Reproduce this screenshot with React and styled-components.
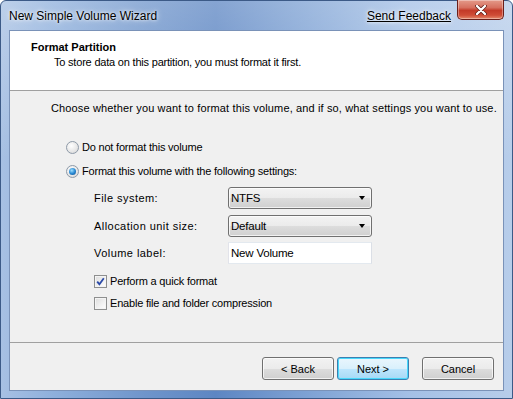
import React from "react";
import styled, { createGlobalStyle, css } from "styled-components";

const Global = createGlobalStyle`
  html, body { margin: 0; padding: 0; background: #fff; }
  body { font-family: "Liberation Sans", Arial, sans-serif; font-size: 11px; letter-spacing: -0.2px; color: #000; }
  * { box-sizing: border-box; }
`;

const Window = styled.div`
  width: 513px;
  height: 399px;
  display: flex;
  flex-direction: column;
  padding: 0 8px 7px 8px;
  border: 1px solid #3c5a87;
  border-radius: 6px 6px 0 0;
  background:
    linear-gradient(180deg, rgba(255,255,255,0.25) 0%, rgba(255,255,255,0) 40%),
    linear-gradient(90deg, #a7c0e3 0%, #8fb0dc 10%, #6f95cb 28%, #5d86c3 42%, #7ea2d4 60%, #a4c0e6 80%, #b7cdea 100%);
`;

const TitleBar = styled.div`
  height: 29px;
  flex: none;
  display: flex;
  align-items: flex-start;
  font-size: 12px;
  letter-spacing: 0;
`;

const Title = styled.div`
  flex: 1;
  padding-top: 8px;
  color: #000;
  text-shadow: 0 0 6px rgba(255,255,255,0.9), 0 0 3px rgba(255,255,255,0.9);
`;

const Link = styled.a`
  margin-top: 8px;
  margin-right: 6px;
  color: #000;
  text-decoration: underline;
  text-shadow: 0 0 6px rgba(255,255,255,0.9), 0 0 3px rgba(255,255,255,0.9);
  cursor: pointer;
`;

const CloseButton = styled.div`
  width: 47px;
  height: 20px;
  margin-top: -1px;
  border: 1px solid #6b1f1a;
  border-top: none;
  border-radius: 0 0 5px 5px;
  background: linear-gradient(180deg, #e49a8a 0%, #d6705f 40%, #c33a28 55%, #cf4c36 80%, #e58a6c 100%);
  box-shadow: inset 0 0 0 1px rgba(255,255,255,0.35);
  display: flex;
  align-items: center;
  justify-content: center;
`;

const Content = styled.div`
  flex: 1;
  display: flex;
  flex-direction: column;
  background: #f0f0f0;
  border: 1px solid #7a92b8;
`;

const Header = styled.div`
  height: 60px;
  flex: none;
  background: #fff;
  border-bottom: 1px solid #a0a0a0;
  padding: 9px 0 0 21px;
`;

const HeaderTitle = styled.div`
  font-weight: bold;
  letter-spacing: 0;
  line-height: 15px;
`;

const HeaderSub = styled.div`
  padding-left: 23px;
  line-height: 15px;
`;

const Body = styled.div`
  flex: 1;
  padding: 10px 0 0 41px;
  border-bottom: 1px solid #a0a0a0;
`;

const Intro = styled.div`
  line-height: 15px;
  white-space: nowrap;
  letter-spacing: 0.14px;
  margin-bottom: 19px;
`;

const OptionRow = styled.label`
  display: flex;
  align-items: center;
  gap: 2px;
  height: 24px;
  margin-left: 15px;
`;

const Radio = styled.span`
  width: 13px;
  height: 13px;
  margin-right: 1px;
  border-radius: 50%;
  border: 1px solid #8e9aa8;
  background: radial-gradient(circle at 40% 35%, #ffffff 0%, #e6e6e6 60%, #d0d0d0 100%);
  display: flex;
  align-items: center;
  justify-content: center;
  ${(p) =>
    p.$checked &&
    css`
      &::after {
        content: "";
        width: 7px;
        height: 7px;
        border-radius: 50%;
        background: radial-gradient(circle at 40% 35%, #9fe0ff 0%, #2a8ad4 50%, #0e4a8a 100%);
      }
    `}
`;

const Settings = styled.div`
  margin: 4px 0 0 43px;
  display: grid;
  grid-template-columns: 134px 144px;
  row-gap: 6px;
  align-items: center;
`;

const FieldLabel = styled.div`
  line-height: 15px;
  letter-spacing: 0.45px;
`;

const Combo = styled.div`
  height: 22px;
  border: 1px solid #707070;
  border-radius: 3px;
  background: linear-gradient(180deg, #f3f3f3 0%, #ebebeb 50%, #dddddd 51%, #cfcfcf 100%);
  box-shadow: inset 0 0 0 1px rgba(255,255,255,0.7);
  display: flex;
  align-items: center;
  padding: 0 6px 0 2px;
  justify-content: space-between;
  font-size: 11.5px;
`;

const Arrow = styled.span`
  width: 0;
  height: 0;
  border-left: 3.5px solid transparent;
  border-right: 3.5px solid transparent;
  border-top: 4px solid #000;
`;

const TextInput = styled.div`
  height: 22px;
  margin-top: -1px;
  border: 1px solid #abadb3;
  border-top-color: #e3e9ef;
  border-left-color: #e2e3ea;
  border-right-color: #dbdfe6;
  border-bottom-color: #e3e9ef;
  background: #fff;
  padding: 0 2px;
  display: flex;
  align-items: center;
  font-size: 11.5px;
`;

const Checks = styled.div`
  margin: 6px 0 0 43px;
  display: flex;
  flex-direction: column;
`;

const CheckRow = styled.label`
  display: flex;
  align-items: center;
  gap: 3px;
  height: 22px;
`;

const Checkbox = styled.span`
  width: 13px;
  height: 13px;
  border: 1px solid #8e8f8f;
  background: linear-gradient(135deg, #dcdcdc 0%, #f2f2f2 60%, #ffffff 100%);
  box-shadow: inset 0 0 0 1px #f4f4f4;
  display: flex;
  align-items: center;
  justify-content: center;
`;

const Footer = styled.div`
  height: 47px;
  flex: none;
  display: flex;
  align-items: flex-start;
  justify-content: flex-end;
  padding: 14px 9px 0 0;
`;

const Button = styled.div`
  width: 72px;
  height: 23px;
  margin-left: ${(p) => p.$gap || 0}px;
  border: 1px solid ${(p) => (p.$default ? "#3c7fb1" : "#707070")};
  border-radius: 3px;
  background: ${(p) =>
    p.$default
      ? "linear-gradient(180deg, #eaf6fd 0%, #d9f0fc 50%, #bee6fd 51%, #a7d9f5 100%)"
      : "linear-gradient(180deg, #f2f2f2 0%, #ebebeb 50%, #dddddd 51%, #cfcfcf 100%)"};
  box-shadow: inset 0 0 0 1px ${(p) => (p.$default ? "#48d8fb" : "rgba(255,255,255,0.7)")};
  display: flex;
  align-items: center;
  justify-content: center;
  letter-spacing: 0;
`;

const CheckMark = () => (
  <svg width="9" height="9" viewBox="0 0 9 9">
    <path d="M1.2 4.6 L3.4 7.2 L7.8 1.2" fill="none" stroke="#2b4aa8" strokeWidth="1.8" />
  </svg>
);

const CloseX = () => (
  <svg width="12" height="10" viewBox="0 0 12 10">
    <path d="M2 1 L10 9 M10 1 L2 9" stroke="#5a1a12" strokeWidth="3.8" strokeLinecap="round" />
    <path d="M2 1 L10 9 M10 1 L2 9" stroke="#fff" strokeWidth="2.4" strokeLinecap="round" />
  </svg>
);

export default function App() {
  return (
    <>
      <Global />
      <Window>
        <TitleBar>
          <Title>New Simple Volume Wizard</Title>
          <Link>Send Feedback</Link>
          <CloseButton>
            <CloseX />
          </CloseButton>
        </TitleBar>
        <Content>
          <Header>
            <HeaderTitle>Format Partition</HeaderTitle>
            <HeaderSub>To store data on this partition, you must format it first.</HeaderSub>
          </Header>
          <Body>
            <Intro>Choose whether you want to format this volume, and if so, what settings you want to use.</Intro>
            <OptionRow>
              <Radio />
              Do not format this volume
            </OptionRow>
            <OptionRow>
              <Radio $checked />
              Format this volume with the following settings:
            </OptionRow>
            <Settings>
              <FieldLabel>File system:</FieldLabel>
              <Combo>
                NTFS
                <Arrow />
              </Combo>
              <FieldLabel>Allocation unit size:</FieldLabel>
              <Combo>
                Default
                <Arrow />
              </Combo>
              <FieldLabel>Volume label:</FieldLabel>
              <TextInput>New Volume</TextInput>
            </Settings>
            <Checks>
              <CheckRow>
                <Checkbox>
                  <CheckMark />
                </Checkbox>
                Perform a quick format
              </CheckRow>
              <CheckRow>
                <Checkbox />
                Enable file and folder compression
              </CheckRow>
            </Checks>
          </Body>
          <Footer>
            <Button>&lt; Back</Button>
            <Button $default $gap={3}>Next &gt;</Button>
            <Button $gap={13}>Cancel</Button>
          </Footer>
        </Content>
      </Window>
    </>
  );
}
